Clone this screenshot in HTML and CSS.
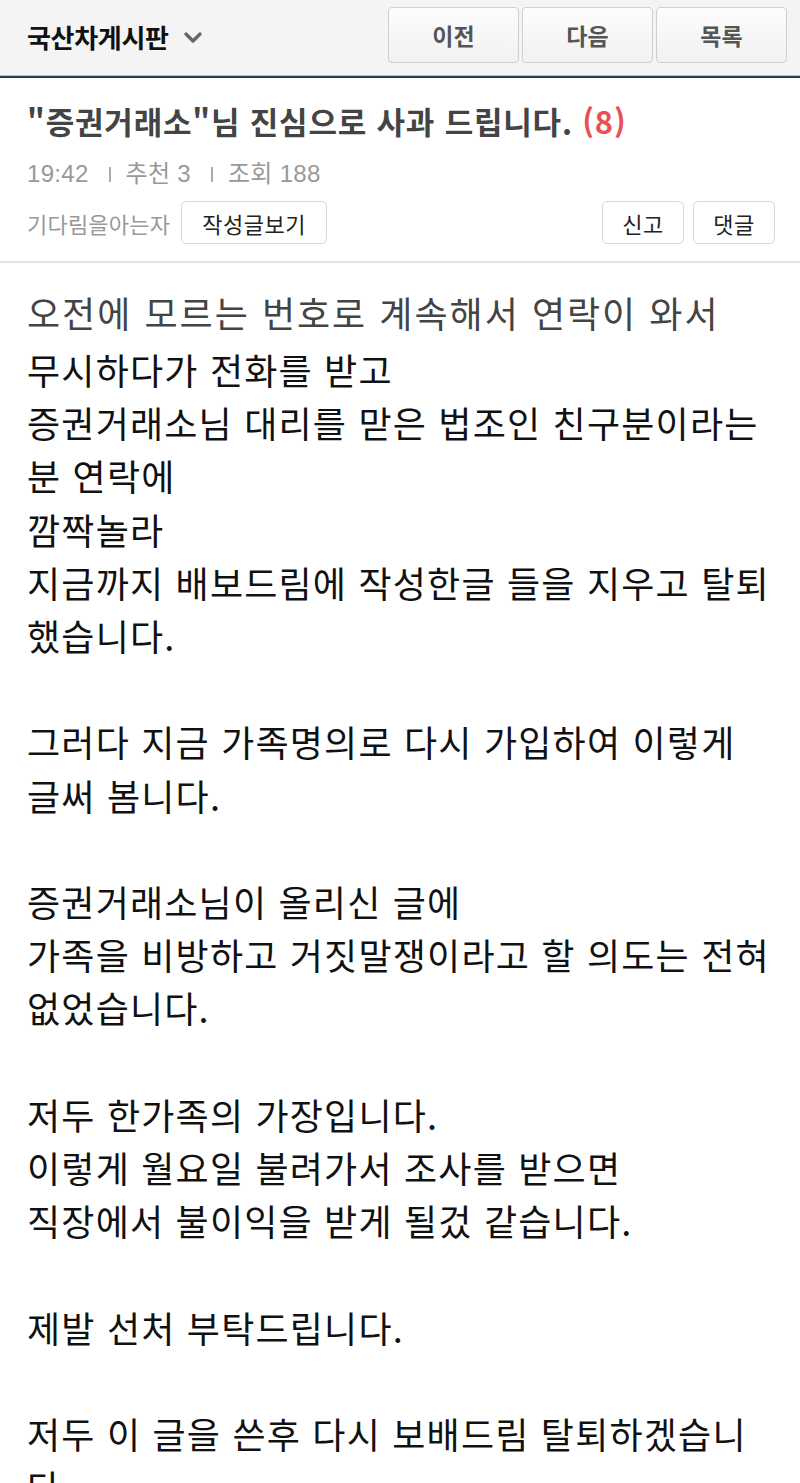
FILE: index.html
```html
<!DOCTYPE html>
<html lang="ko">
<head>
<meta charset="utf-8">
<title>국산차게시판</title>
<link rel="stylesheet" href="styles.css">
</head>
<body>
<header class="topbar">
  <div class="board">
    <span class="board-name">국산차게시판</span>
    <svg class="chev" width="20" height="14" viewBox="0 0 20 14"><path d="M3 3 L10 10 L17 3" fill="none" stroke="#666" stroke-width="3.4" stroke-linecap="round" stroke-linejoin="round"/></svg>
  </div>
  <nav class="nav">
    <span class="nav-btn">이전</span>
    <span class="nav-btn">다음</span>
    <span class="nav-btn">목록</span>
  </nav>
</header>
<section class="post-head">
  <h1 class="title">"증권거래소"님 진심으로 사과 드립니다. <span class="count">(8)</span></h1>
  <div class="meta">
    <span>19:42</span><span class="sep"></span><span>추천 3</span><span class="sep"></span><span>조회 188</span>
  </div>
  <div class="author-row">
    <div class="author">
      <span class="author-name">기다림을아는자</span>
      <span class="btn">작성글보기</span>
    </div>
    <div class="actions">
      <span class="btn small">신고</span>
      <span class="btn small">댓글</span>
    </div>
  </div>
</section>
<article class="content">
  <div class="first">오전에 모르는 번호로 계속해서 연락이 와서</div>
  <div class="text">무시하다가 전화를 받고<br>증권거래소님 대리를 맏은 법조인 친구분이라는<br>분 연락에<br>깜짝놀라<br>지금까지 배보드림에 작성한글 들을 지우고 탈퇴<br>했습니다.<br><br>그러다 지금 가족명의로 다시 가입하여 이렇게<br>글써 봄니다.<br><br>증권거래소님이 올리신 글에<br>가족을 비방하고 거짓말쟁이라고 할 의도는 전혀<br>없었습니다.<br><br>저두 한가족의 가장입니다.<br>이렇게 월요일 불려가서 조사를 받으면<br>직장에서 불이익을 받게 될겄 같습니다.<br><br>제발 선처 부탁드립니다.<br><br>저두 이 글을 쓴후 다시 보배드림 탈퇴하겠습니<br>다.</div>
</article>
</body>
</html>
```

FILE: styles.css
```css
* { box-sizing: border-box; }
html, body { margin: 0; padding: 0; background: #fff; }
body {
  font-family: "Noto Sans CJK KR", "Noto Sans", sans-serif;
  color: #111;
  overflow-x: hidden;
}
.topbar {
  height: 78px;
  background: #f4f4f4;
  border-bottom: 2px solid #2c3e50;
  box-shadow: inset 0 -1px 0 #b9c3cd;
  display: flex;
  align-items: flex-start;
  justify-content: space-between;
  padding: 0 13px 0 27px;
}
.board {
  display: flex;
  align-items: center;
  height: 72px;
  gap: 14px;
}
.board-name {
  font-size: 26px;
  font-weight: 700;
  color: #111;
  letter-spacing: -0.3px;
}
.chev { margin-top: 3px; }
.nav {
  display: flex;
  gap: 3px;
  padding-top: 7px;
}
.nav-btn {
  width: 131px;
  height: 56px;
  display: flex;
  align-items: center;
  justify-content: center;
  border: 1px solid #cfcfcf;
  border-radius: 4px;
  background: linear-gradient(#fdfdfd, #f1f1f1);
  font-size: 23px;
  font-weight: 700;
  color: #555;
}
.post-head {
  padding: 23px 25px 17px 27px;
  border-bottom: 2px solid #e2e2e2;
}
.title {
  margin: 0;
  font-size: 31px;
  line-height: 40px;
  font-weight: 700;
  color: #444;
  letter-spacing: 0.8px;
}
.count { color: #e9504f; }
.meta {
  margin-top: 18px;
  display: flex;
  align-items: center;
  font-family: "Liberation Sans", "Noto Sans CJK KR", sans-serif;
  font-size: 24px;
  letter-spacing: 0.3px;
  line-height: 30px;
  color: #999;
}
.sep {
  display: inline-block;
  width: 0;
  height: 15px;
  border-left: 2px solid #aaa;
  margin: 0 15px 0 20px;
}
.author-row {
  margin-top: 12px;
  display: flex;
  justify-content: space-between;
  align-items: center;
}
.author, .actions {
  display: flex;
  align-items: center;
  gap: 9px;
}
.author { gap: 11px; }
.author-name {
  font-size: 22px;
  color: #999;
  letter-spacing: 0.2px;
}
.btn {
  height: 43px;
  width: 146px;
  display: inline-flex;
  align-items: center;
  justify-content: center;
  border: 1px solid #d8d8d8;
  border-radius: 5px;
  background: #fff;
  font-size: 22px;
  letter-spacing: 0.5px;
  color: #222;
}
.btn.small { width: 82px; }
.content {
  padding: 23px 0 0 27px;
  font-size: 36px;
  letter-spacing: 1.2px;
  line-height: 53.2px;
  white-space: nowrap;
}
.first {
  color: #444;
  letter-spacing: 2px;
  margin-bottom: 3.8px;
}
.text { color: #111; }
```
